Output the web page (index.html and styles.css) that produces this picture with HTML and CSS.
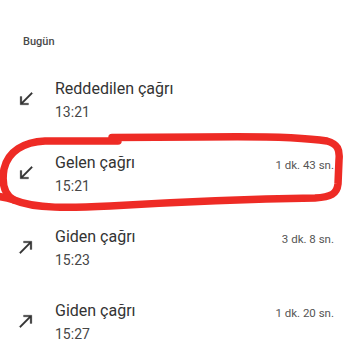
FILE: index.html
```html
<!DOCTYPE html>
<html lang="tr">
<head>
<meta charset="utf-8">
<link rel="stylesheet" href="styles.css">
</head>
<body>
<div class="page">
  <div class="section">Bugün</div>
  <ul class="calls">
    <li class="call">
      <svg class="icon" viewBox="0 0 24 24"><path d="M20 5.41L18.59 4 7 15.59V9H5v10h10v-2H8.41z"/></svg>
      <div class="info">
        <div class="title">Reddedilen çağrı</div>
        <div class="time">13:21</div>
      </div>
    </li>
    <li class="call">
      <svg class="icon" viewBox="0 0 24 24"><path d="M20 5.41L18.59 4 7 15.59V9H5v10h10v-2H8.41z"/></svg>
      <div class="info">
        <div class="title">Gelen çağrı</div>
        <div class="time">15:21</div>
      </div>
      <div class="dur">1 dk. 43 sn.</div>
    </li>
    <li class="call">
      <svg class="icon" viewBox="0 0 24 24"><path d="M9 5v2h6.59L4 18.59 5.41 20 17 8.41V15h2V5z"/></svg>
      <div class="info">
        <div class="title">Giden çağrı</div>
        <div class="time">15:23</div>
      </div>
      <div class="dur">3 dk. 8 sn.</div>
    </li>
    <li class="call">
      <svg class="icon" viewBox="0 0 24 24"><path d="M9 5v2h6.59L4 18.59 5.41 20 17 8.41V15h2V5z"/></svg>
      <div class="info">
        <div class="title">Giden çağrı</div>
        <div class="time">15:27</div>
      </div>
      <div class="dur">1 dk. 20 sn.</div>
    </li>
  </ul>
  <svg class="mark" viewBox="0 0 350 350">
    <path d="M112 137.5 L200 137 C260 136 308 138 327 141 C338 144 340 150 339 160 L338 184 C337 194 331 197 315 198 C250 199 160 203 110 206 C70 208 35 209 14 200 C3 194 2 181 4 169 C8 151 24 142 45 141 L118 141"/>
    <path d="M14 200 C8 198 4 197 -4 196"/>
  </svg>
</div>
</body>
</html>
```
FILE: styles.css
```css
html, body {
  margin: 0;
  padding: 0;
  background: #ffffff;
}
.page {
  position: relative;
  width: 350px;
  height: 350px;
  overflow: hidden;
  font-family: Roboto, "Liberation Sans", sans-serif;
}
.section {
  padding: 34px 0 0 23px;
  font-size: 11px;
  line-height: 16px;
  font-weight: 500;
  color: #4a4a4a;
  margin-bottom: 14px;
}
.calls {
  list-style: none;
  margin: 0;
  padding: 0;
}
.call {
  display: flex;
  align-items: center;
  padding: 15px 16px 16px 16px;
}
.icon {
  width: 20px;
  height: 20px;
  flex: none;
  fill: #333333;
  stroke: #333333;
  stroke-width: 0.35;
  margin-bottom: 3px;
}
.info {
  flex: 1;
  margin-left: 19px;
}
.title {
  font-size: 16px;
  line-height: 20px;
  color: #333333;
  margin-bottom: 3px;
}
.time {
  font-size: 14px;
  line-height: 20px;
  color: #474747;
}
.dur {
  align-self: flex-start;
  margin-top: 2px;
  font-size: 11.5px;
  line-height: 20px;
  color: #555555;
}
.mark {
  position: absolute;
  left: 0;
  top: 0;
  width: 350px;
  height: 350px;
  pointer-events: none;
  fill: none;
  stroke: #ee2b25;
  stroke-width: 7.5;
  stroke-linecap: round;
  stroke-linejoin: round;
}
```
